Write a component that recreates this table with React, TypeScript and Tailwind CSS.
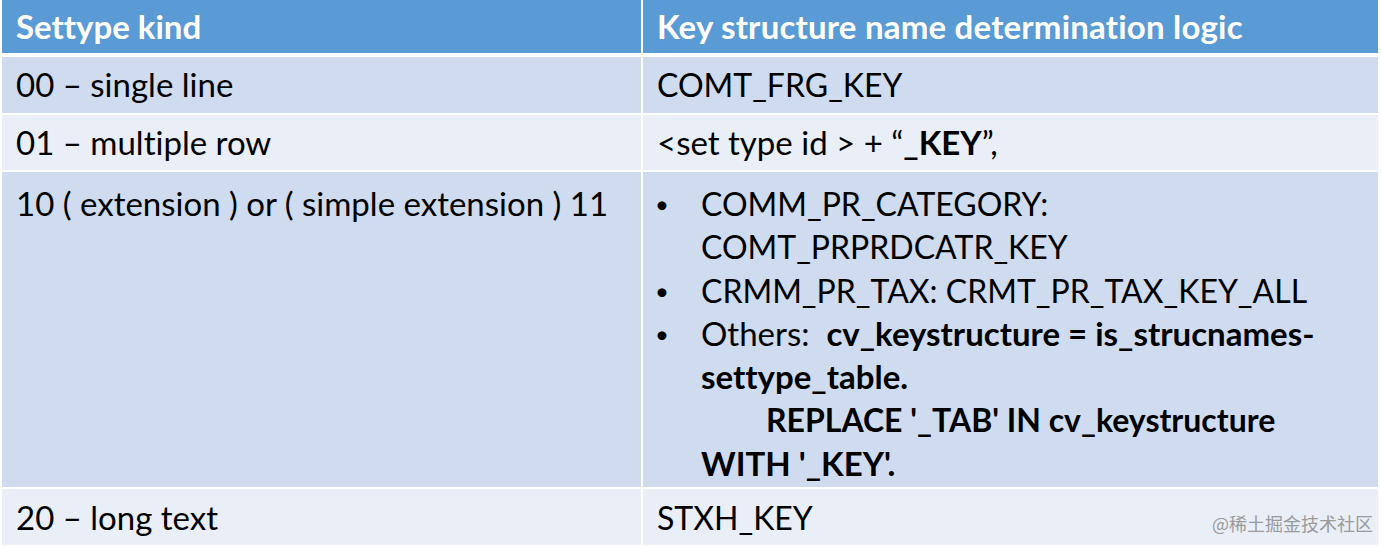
const font = { fontFamily: '"Lato", "Liberation Sans", sans-serif' }

function App() {
  return (
    <div className="relative w-[1381px] h-[547px] bg-white text-black [font-variant-ligatures:none]" style={font}>
      <div className="flex flex-col pl-[2px] w-[1378px]">
        <div className="grid grid-cols-[639px_1fr] gap-x-[2px] h-[53px] bg-white">
          <div className="bg-[#5b9bd5] text-white font-bold text-[33px] flex items-center pl-[14px]">Settype kind</div>
          <div className="bg-[#5b9bd5] text-white font-bold text-[33px] tracking-[0.2px] flex items-center pl-[14px]">Key structure name determination logic</div>
        </div>

        <div className="grid grid-cols-[639px_1fr] gap-x-[2px] h-[56px] mt-[4px]">
          <div className="bg-[#cfdbee] text-[33px] flex items-center pl-[14px]">00 – single line</div>
          <div className="bg-[#cfdbee] text-[32px] flex items-center pl-[14px]">COMT_FRG_KEY</div>
        </div>

        <div className="grid grid-cols-[639px_1fr] gap-x-[2px] h-[55px] mt-[2px]">
          <div className="bg-[#e9eef7] text-[33px] flex items-center pl-[14px]">01 – multiple row</div>
          <div className="bg-[#e9eef7] text-[33px] flex items-center pl-[14px]">
            &lt;set type id &gt; + “<b>_KEY</b>”,
          </div>
        </div>

        <div className="grid grid-cols-[639px_1fr] gap-x-[2px] h-[315px] mt-[2px]">
          <div className="bg-[#cfdbee] text-[33px] leading-[43px] pl-[14px] pt-[10px]">10 ( extension ) or ( simple extension ) 11</div>
          <div className="bg-[#cfdbee] text-[32px] leading-[43.3px] pl-[12px] pt-[10px]">
            <div className="flex">
              <span className="w-[46px] shrink-0 text-[24px]">•</span>
              <span>COMM_PR_CATEGORY:<br />COMT_PRPRDCATR_KEY</span>
            </div>
            <div className="flex">
              <span className="w-[46px] shrink-0 text-[24px]">•</span>
              <span>CRMM_PR_TAX: CRMT_PR_TAX_KEY_ALL</span>
            </div>
            <div className="flex">
              <span className="w-[46px] shrink-0 text-[24px]">•</span>
              <span className="text-[33px]">
                Others:&nbsp; <b>cv_keystructure = is_strucnames-</b>
                <br />
                <b>settype_table.</b>
                <br />
                <b className="pl-[65px] text-[32px]">REPLACE '_TAB' IN cv_keystructure</b>
                <br />
                <b>WITH '_KEY'.</b>
              </span>
            </div>
          </div>
        </div>

        <div className="grid grid-cols-[639px_1fr] gap-x-[2px] h-[56px] mt-[2px]">
          <div className="bg-[#e9eef7] text-[33px] flex items-center pl-[14px] pt-[2px]">20 – long text</div>
          <div className="bg-[#e9eef7] text-[32px] flex items-center pl-[14px] pt-[2px]">STXH_KEY</div>
        </div>
      </div>

      <div
        className="absolute right-[8px] bottom-[10px] text-[18px] text-[#9a9a9a]"
        style={{ fontFamily: '"Noto Sans CJK SC", sans-serif' }}
      >
        @稀土掘金技术社区
      </div>
    </div>
  )
}

export default App
